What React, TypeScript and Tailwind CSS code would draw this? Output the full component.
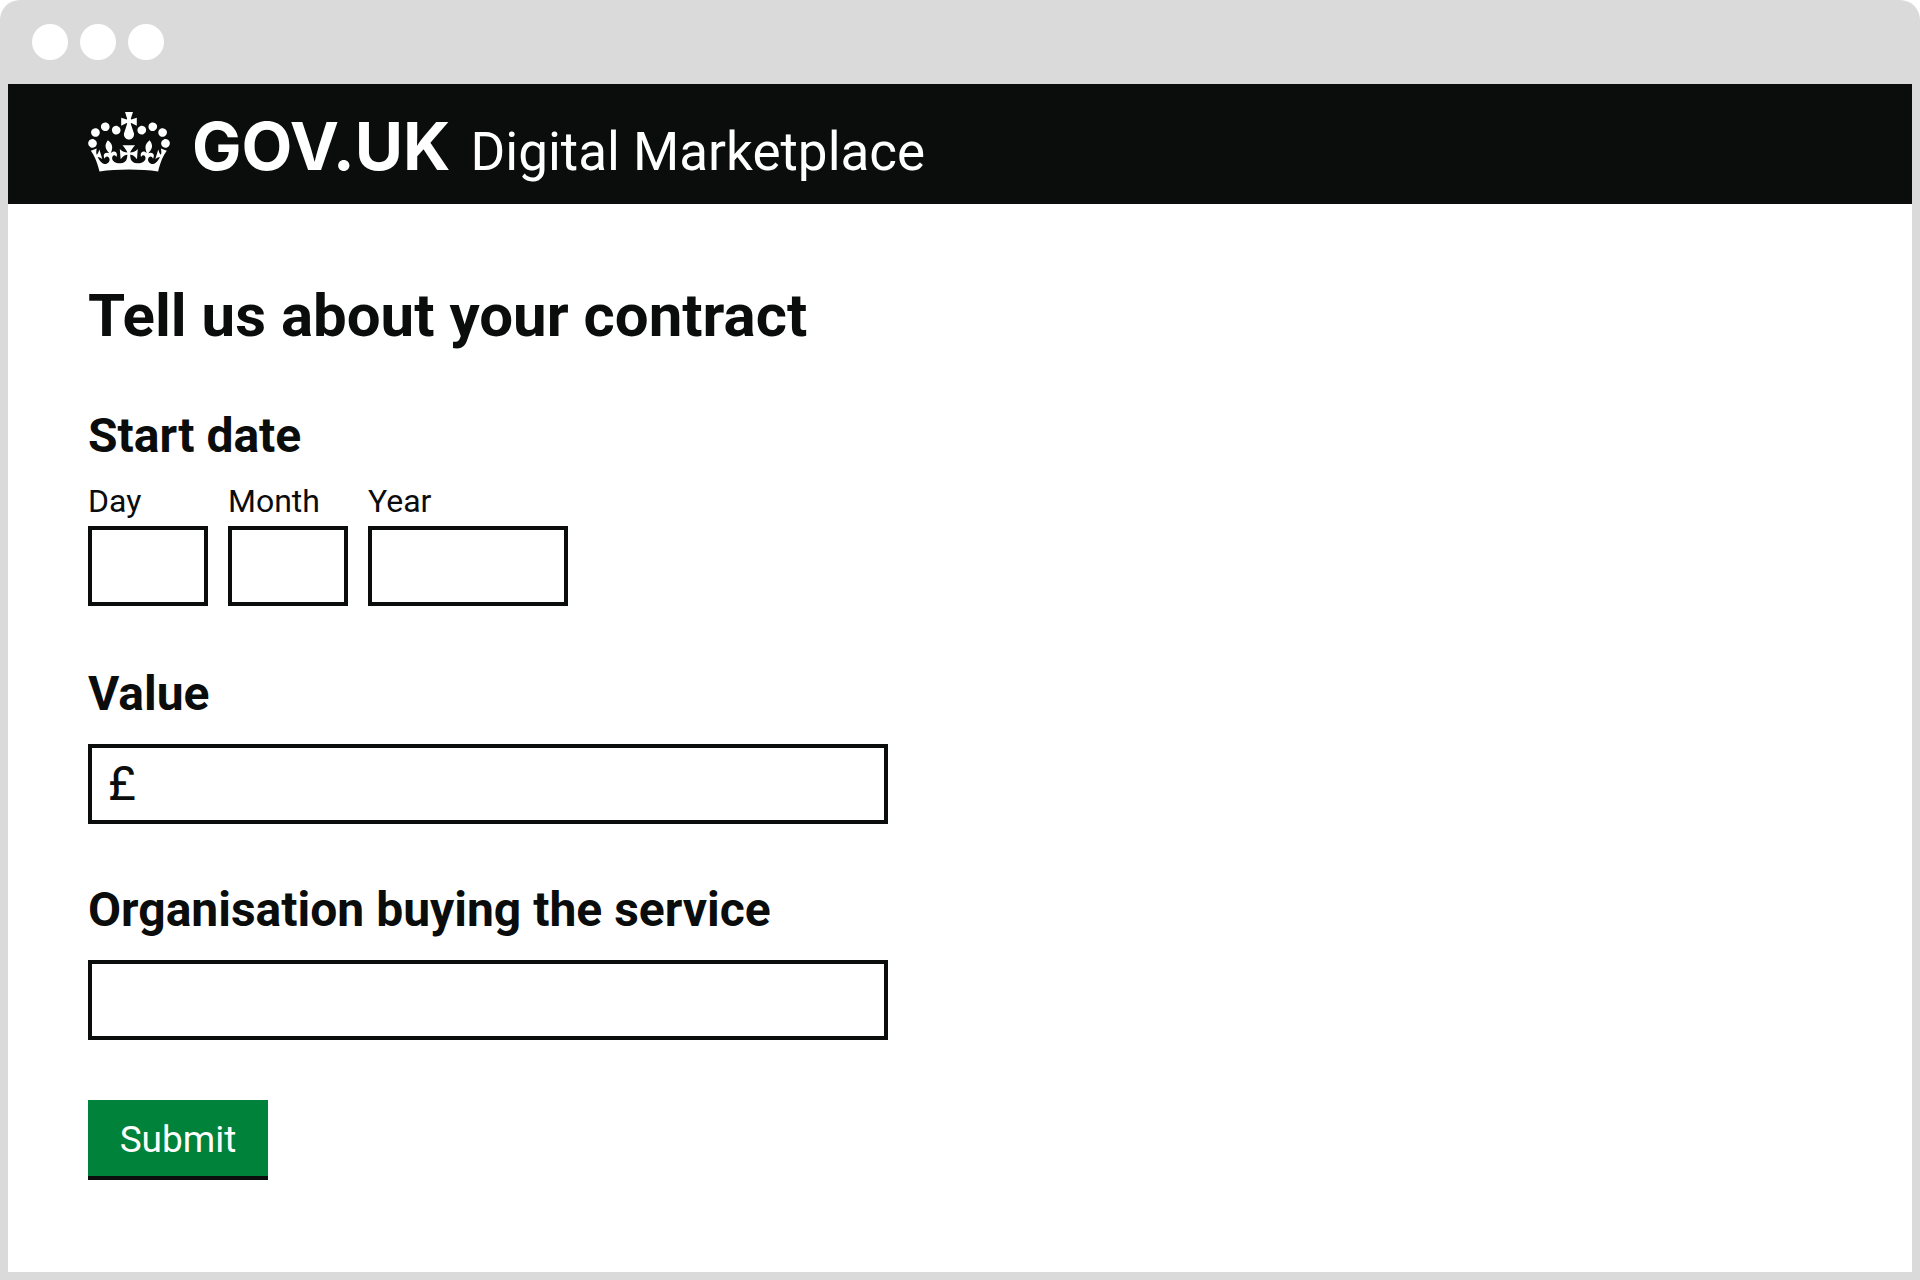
import type { ReactNode } from 'react';

const fieldBox = 'h-20 border-4 border-[#0b0c0c] bg-white text-[48px] outline-none';

function Crown() {
  return (
    <svg viewBox="0 0 132 97" className="h-[60px] w-[82px] shrink-0" fill="currentColor" aria-hidden="true">
      <path
        fillRule="evenodd"
        d="M25 30.2c3.5 1.5 7.7-.2 9.1-3.7 1.5-3.6-.2-7.8-3.9-9.2-3.6-1.4-7.6.3-9.1 3.9-1.4 3.5.3 7.5 3.9 9zM9 39.5c3.6 1.5 7.8-.2 9.2-3.7 1.5-3.6-.2-7.8-3.9-9.1-3.6-1.5-7.6.2-9.1 3.8-1.4 3.5.3 7.5 3.8 9zM4.4 57.2c3.5 1.5 7.7-.2 9.1-3.8 1.5-3.6-.2-7.7-3.9-9.1-3.5-1.5-7.6.3-9.1 3.8-1.4 3.5.3 7.6 3.9 9.1zm38.3-21.4c3.5 1.5 7.7-.2 9.1-3.8 1.5-3.6-.2-7.7-3.9-9.1-3.6-1.5-7.6.3-9.1 3.8-1.3 3.6.4 7.7 3.9 9.1zm64.4-5.6c-3.6 1.5-7.8-.2-9.1-3.7-1.5-3.6.2-7.8 3.8-9.2 3.6-1.4 7.7.3 9.2 3.9 1.3 3.5-.4 7.5-3.9 9zm15.9 9.3c-3.6 1.5-7.7-.2-9.1-3.7-1.5-3.6.2-7.8 3.7-9.1 3.6-1.5 7.7.2 9.2 3.8 1.5 3.5-.3 7.5-3.8 9zm4.7 17.7c-3.6 1.5-7.8-.2-9.2-3.8-1.5-3.6.2-7.7 3.9-9.1 3.6-1.5 7.7.3 9.2 3.8 1.3 3.5-.4 7.6-3.9 9.1zM89.3 35.8c-3.6 1.5-7.8-.2-9.2-3.8-1.4-3.6.2-7.7 3.9-9.1 3.6-1.5 7.7.3 9.2 3.8 1.4 3.6-.3 7.7-3.9 9.1zM69.7 17.7l8.9 4.7V9.3l-8.9 2.8c-.2-.3-.5-.6-.9-.9L72.4 0H59.6l3.5 11.2c-.3.3-.6.5-.9.9l-8.8-2.8v13.1l8.8-4.7c.3.3.6.7.9.9l-5 15.4v.1c-.2.8-.4 1.6-.4 2.4 0 4.1 3.1 7.5 7 8.1h.2c.3 0 .7.1 1 .1.4 0 .7 0 1-.1h.2c4-.6 7.1-4.1 7.1-8.1 0-.8-.1-1.7-.4-2.4V34l-5.1-15.4c.4-.2.7-.6 1-.9zM66 92.8c16.9 0 32.8 1.1 47.1 3.2 4-16.9 8.9-26.7 14-33.5l-9.6-3.4c1 4.9 1.1 7.2 0 10.2-1.5-1.4-3-4.3-4.2-8.7L108.6 76c2.8-2 5-3.2 7.5-3.3-4.4 9.4-10 11.9-13.6 11.2-4.3-.8-6.3-4.6-5.6-7.9 1-4.7 5.7-5.9 8-.5 4.3-8.7-3-11.4-7.6-8.8 7.1-7.2 7.9-13.5 2.1-21.1-8 6.1-8.1 12.3-4.5 20.8-4.7-5.4-12.1-2.5-9.5 6.2 3.4-5.2 7.9-2 7.2 3.1-.6 4.3-6.4 7.8-13.5 7.2-10.3-.9-10.9-8-11.2-13.8 2.5-.5 7.1 1.8 11 7.3L80.2 60c-4.1 4.4-8 5.3-12.3 5.4 1.4-4.4 8-11.6 8-11.6H55.5s6.4 7.2 7.9 11.6c-4.2-.1-8-1-12.3-5.4l1.4 16.4c3.9-5.5 8.5-7.7 10.9-7.3-.3 5.8-.9 12.8-11.1 13.8-7.2.6-12.9-2.9-13.5-7.2-.7-5 3.8-8.3 7.1-3.1 2.7-8.7-4.6-11.6-9.4-6.2 3.7-8.5 3.6-14.7-4.6-20.8-5.8 7.6-5 13.9 2.2 21.1-4.7-2.6-11.9.1-7.7 8.8 2.3-5.5 7.1-4.2 8.1.5.7 3.3-1.3 7.1-5.7 7.9-3.5.7-9-1.8-13.5-11.2 2.5.1 4.7 1.3 7.5 3.3l-4.7-15.4c-1.2 4.4-2.7 7.2-4.3 8.7-1.1-3-.9-5.3 0-10.2l-9.5 3.4c5 6.9 9.9 16.7 14 33.5 14.8-2.1 30.8-3.2 47.7-3.2z"
      />
    </svg>
  );
}

function DatePart({ id, label, width }: { id: string; label: string; width: string }) {
  return (
    <div className="flex flex-col gap-1">
      <label htmlFor={id} className="text-[32px] leading-[42px]">
        {label}
      </label>
      <input id={id} name={id} type="text" inputMode="numeric" className={`${fieldBox} ${width} px-3`} />
    </div>
  );
}

function FieldLabel({ htmlFor, children }: { htmlFor: string; children: ReactNode }) {
  return (
    <label htmlFor={htmlFor} className="text-[48px] leading-[56px] font-bold">
      {children}
    </label>
  );
}

export default function App() {
  return (
    <div className="bg-white font-['Roboto',sans-serif] text-[#0b0c0c]">
      <div className="flex min-h-screen flex-col rounded-t-[20px] bg-[#dadada] px-2 pb-2">
        <div className="flex h-[84px] items-center gap-3 px-6">
          <span className="size-9 rounded-full bg-white" />
          <span className="size-9 rounded-full bg-white" />
          <span className="size-9 rounded-full bg-white" />
        </div>

        <header className="flex h-[120px] items-start gap-[22px] bg-[#0b0c0c] px-20 pt-7 text-white">
          <Crown />
          <a href="#" className="flex items-baseline gap-5 whitespace-nowrap">
            <span className="font-['Inter',sans-serif] text-[66px] leading-[68px] font-bold">GOV.UK</span>
            <span className="text-[53px] leading-[60px]">Digital Marketplace</span>
          </a>
        </header>

        <main className="grow bg-white px-20 pt-[76px] pb-20">
          <h1 className="text-[60px] leading-[72px] font-bold">Tell us about your contract</h1>

          <form onSubmit={(e) => e.preventDefault()}>
            <fieldset className="mt-14">
              <legend className="text-[48px] leading-[56px] font-bold">Start date</legend>
              <div className="mt-4 flex gap-5">
                <DatePart id="day" label="Day" width="w-[120px]" />
                <DatePart id="month" label="Month" width="w-[120px]" />
                <DatePart id="year" label="Year" width="w-[200px]" />
              </div>
            </fieldset>

            <div className="mt-[60px] flex max-w-[800px] flex-col gap-[22px]">
              <FieldLabel htmlFor="value">Value</FieldLabel>
              <div className={`${fieldBox} flex items-center gap-3 px-4`}>
                <span>£</span>
                <input id="value" name="value" type="text" inputMode="decimal" className="min-w-0 grow outline-none" />
              </div>
            </div>

            <div className="mt-[58px] flex max-w-[800px] flex-col gap-[22px]">
              <FieldLabel htmlFor="organisation">Organisation buying the service</FieldLabel>
              <input id="organisation" name="organisation" type="text" className={`${fieldBox} px-4`} />
            </div>

            <button
              type="submit"
              className="mt-[60px] h-20 w-[180px] border-b-4 border-[#0b0c0c] bg-[#00823b] pt-1 text-[37px] leading-[44px] text-white"
            >
              Submit
            </button>
          </form>
        </main>
      </div>
    </div>
  );
}
